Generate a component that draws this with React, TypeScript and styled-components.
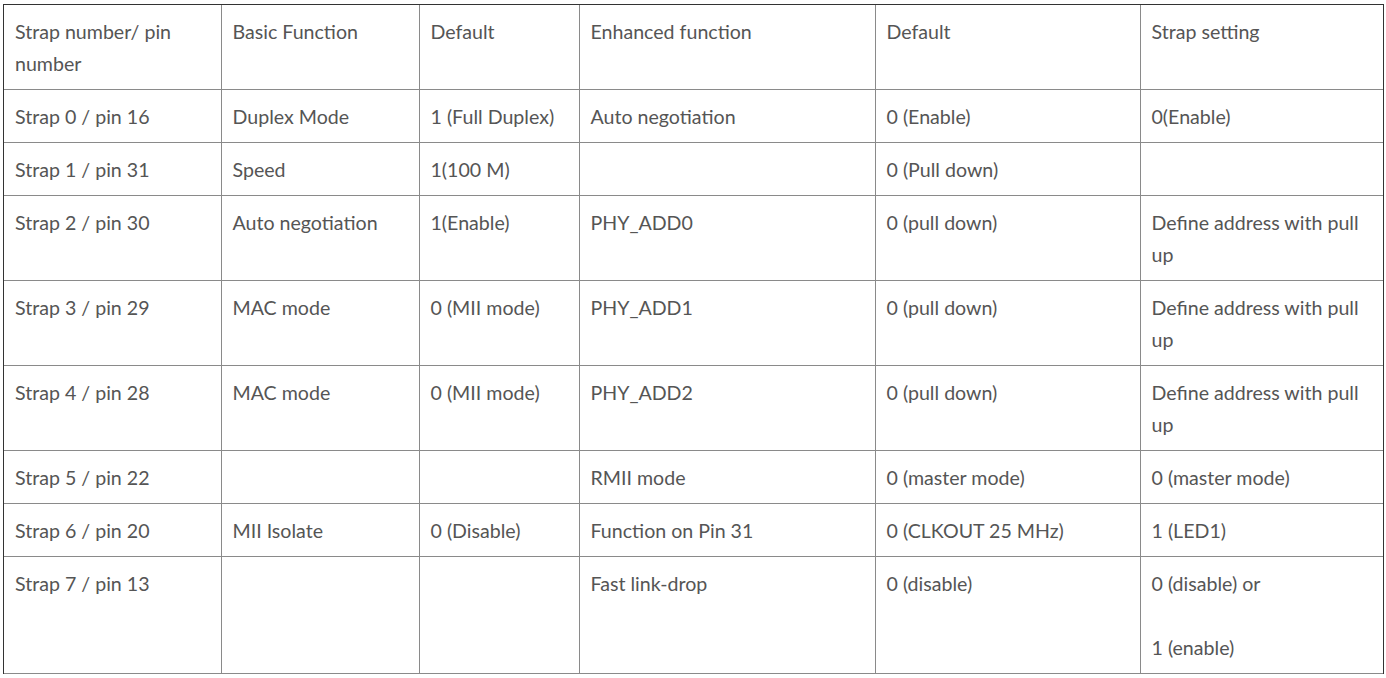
import React from "react";
import styled, { createGlobalStyle } from "styled-components";

const Global = createGlobalStyle`
  html, body { margin: 0; padding: 0; background: #fff; }
  body { padding: 4px 0 0 3px; }
`;

const Frame = styled.div`
  width: 1381px;
  border-top: 1px solid #333;
  border-left: 1px solid #333;
  border-right: 1px solid #333;
  box-sizing: border-box;
`;

const Table = styled.table`
  width: 100%;
  border-collapse: collapse;
  table-layout: fixed;
  font-family: Lato, "Liberation Sans", sans-serif;
  font-size: 19.6px;
  line-height: 32px;
  color: #555;
`;

const Cell = styled.td<{ $last?: boolean }>`
  padding: 11px 11px 9px;
  vertical-align: top;
  text-align: left;
  border-bottom: 1px solid #8a8a8a;
  border-right: ${(p) => (p.$last ? "none" : "1px solid #8a8a8a")};
  word-wrap: break-word;
`;

const Para = styled.p`
  margin: 0;
  & + & { margin-top: 32px; }
`;

const widths = [217, 198, 160, 296, 265, 243];

const rows: string[][] = [
  ["Strap number/ pin number", "Basic Function", "Default", "Enhanced function", "Default", "Strap setting"],
  ["Strap 0 / pin 16", "Duplex Mode", "1 (Full Duplex)", "Auto negotiation", "0 (Enable)", "0(Enable)"],
  ["Strap 1 / pin 31", "Speed", "1(100 M)", "", "0 (Pull down)", ""],
  ["Strap 2 / pin 30", "Auto negotiation", "1(Enable)", "PHY_ADD0", "0 (pull down)", "Define address with pull up"],
  ["Strap 3 / pin 29", "MAC mode", "0 (MII mode)", "PHY_ADD1", "0 (pull down)", "Define address with pull up"],
  ["Strap 4 / pin 28", "MAC mode", "0 (MII mode)", "PHY_ADD2", "0 (pull down)", "Define address with pull up"],
  ["Strap 5 / pin 22", "", "", "RMII mode", "0 (master mode)", "0 (master mode)"],
  ["Strap 6 / pin 20", "MII Isolate", "0 (Disable)", "Function on Pin 31", "0 (CLKOUT 25 MHz)", "1 (LED1)"],
  ["Strap 7 / pin 13", "", "", "Fast link-drop", "0 (disable)", "0 (disable) or|1 (enable)"],
];

export default function App() {
  return (
    <>
      <Global />
      <Frame>
        <Table>
          <colgroup>
            {widths.map((w, i) => (
              <col key={i} style={{ width: w }} />
            ))}
          </colgroup>
          <tbody>
            {rows.map((r, ri) => (
              <tr key={ri}>
                {r.map((c, ci) => (
                  <Cell key={ci} $last={ci === r.length - 1}>
                    {c.split("|").map((t, k) => (
                      <Para key={k}>{t}</Para>
                    ))}
                  </Cell>
                ))}
              </tr>
            ))}
          </tbody>
        </Table>
      </Frame>
    </>
  );
}
